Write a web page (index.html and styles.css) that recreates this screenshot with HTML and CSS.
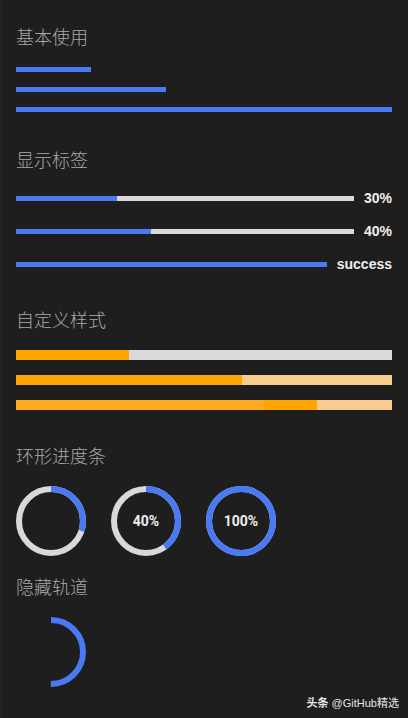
FILE: index.html
```html
<!DOCTYPE html>
<html lang="zh-CN">
<head>
    <meta charset="UTF-8">
    <meta name="viewport" content="width=device-width, initial-scale=1.0">
    <title>Progress</title>
    <link rel="stylesheet" href="styles.css">
</head>
<body>
    <section class="demo">
        <h2 class="title">基本使用</h2>
        <div class="bars">
            <div class="line"><div class="fill" style="width: 20%"></div></div>
            <div class="line"><div class="fill" style="width: 40%"></div></div>
            <div class="line"><div class="fill" style="width: 100%"></div></div>
        </div>
    </section>

    <section class="demo">
        <h2 class="title">显示标签</h2>
        <div class="rows">
            <div class="row">
                <div class="line track"><div class="fill" style="width: 30%"></div></div>
                <span class="label">30%</span>
            </div>
            <div class="row">
                <div class="line track"><div class="fill" style="width: 40%"></div></div>
                <span class="label">40%</span>
            </div>
            <div class="row">
                <div class="line track"><div class="fill" style="width: 100%"></div></div>
                <span class="label">success</span>
            </div>
        </div>
    </section>

    <section class="demo demo-custom">
        <h2 class="title">自定义样式</h2>
        <div class="bars">
            <div class="line thick grey"><div class="fill orange" style="width: 30%"></div></div>
            <div class="line thick peach"><div class="fill orange" style="width: 60%"></div></div>
            <div class="line thick peach">
                <div class="fill orange" style="width: 80%"></div>
                <div class="fill done" style="width: 66%"></div>
            </div>
        </div>
    </section>

    <section class="demo demo-circle">
        <h2 class="title">环形进度条</h2>
        <div class="circles">
            <div class="circle">
                <svg width="70" height="70" viewBox="0 0 70 70">
                    <circle class="ring-track" cx="35" cy="35" r="32"/>
                    <circle class="ring-bar" cx="35" cy="35" r="32" stroke-dasharray="60.32 201.06" transform="rotate(-90 35 35)"/>
                </svg>
            </div>
            <div class="circle">
                <svg width="70" height="70" viewBox="0 0 70 70">
                    <circle class="ring-track" cx="35" cy="35" r="32"/>
                    <circle class="ring-bar" cx="35" cy="35" r="32" stroke-dasharray="80.42 201.06" transform="rotate(-90 35 35)"/>
                </svg>
                <span class="circle-text">40%</span>
            </div>
            <div class="circle">
                <svg width="70" height="70" viewBox="0 0 70 70">
                    <circle class="ring-track" cx="35" cy="35" r="32"/>
                    <circle class="ring-bar" cx="35" cy="35" r="32" stroke-dasharray="201.06 201.06" transform="rotate(-90 35 35)"/>
                </svg>
                <span class="circle-text">100%</span>
            </div>
        </div>
    </section>

    <section class="demo">
        <h2 class="title">隐藏轨道</h2>
        <div class="circles">
            <div class="circle">
                <svg width="70" height="70" viewBox="0 0 70 70">
                    <circle class="ring-bar" cx="35" cy="35" r="32" stroke-dasharray="100.53 201.06" transform="rotate(-90 35 35)"/>
                </svg>
            </div>
        </div>
    </section>

    <div class="mark"><b>头条</b> @GitHub精选</div>
</body>
</html>
```

FILE: styles.css
```css
html {
    background: #1e1e1e;
}

body {
    margin: 0;
    padding: 24px 16px 0;
    height: 718px;
    box-sizing: border-box;
    background: #1e1e1e;
    border-left: 2px solid #242424;
    font-family: "Liberation Sans", Arial, "Noto Sans CJK SC", sans-serif;
    position: relative;
    overflow: hidden;
}

body > .demo {
    margin-left: -2px;
}

.demo {
    margin-bottom: 35px;
}

.demo-custom {
    margin-bottom: 33px;
}

.demo-circle {
    margin-bottom: 18px;
}

.title {
    margin: 0 0 19px;
    font-family: "Noto Sans CJK SC", sans-serif;
    font-size: 18px;
    line-height: 24px;
    font-weight: 300;
    color: #a9a9a9;
}

.bars {
    display: flex;
    flex-direction: column;
    gap: 15px;
}

.line {
    position: relative;
    height: 5px;
}

.line.track {
    flex: 1;
    background: #d9d9d9;
}

.fill {
    position: absolute;
    left: 0;
    top: 0;
    bottom: 0;
    background: #4979f5;
}

.rows {
    display: flex;
    flex-direction: column;
    gap: 17px;
}

.row {
    display: flex;
    align-items: center;
    height: 16px;
}

.label {
    margin-left: 10px;
    font-size: 14px;
    font-weight: bold;
    color: #eeeeee;
    line-height: 16px;
}

.line.thick {
    height: 10px;
}

.line.grey {
    background: #d9d9d9;
}

.line.peach {
    background: #f8cc8e;
}

.fill.orange {
    background: #ffa500;
}

.fill.done {
    background: #fcab22;
}

.circles {
    display: flex;
    gap: 25px;
}

.circle {
    position: relative;
    width: 70px;
    height: 70px;
}

.circle svg {
    display: block;
}

.ring-track {
    fill: none;
    stroke: #d9d9d9;
    stroke-width: 6;
}

.ring-bar {
    fill: none;
    stroke: #4979f5;
    stroke-width: 6;
}

.circle-text {
    position: absolute;
    inset: 0;
    display: flex;
    align-items: center;
    justify-content: center;
    font-family: Roboto, "Liberation Sans", sans-serif;
    font-size: 14px;
    font-weight: bold;
    color: #eeeeee;
}

.mark {
    position: absolute;
    right: 9px;
    bottom: 8px;
    font-size: 11px;
    color: #e6e6e6;
    line-height: 14px;
}
```
